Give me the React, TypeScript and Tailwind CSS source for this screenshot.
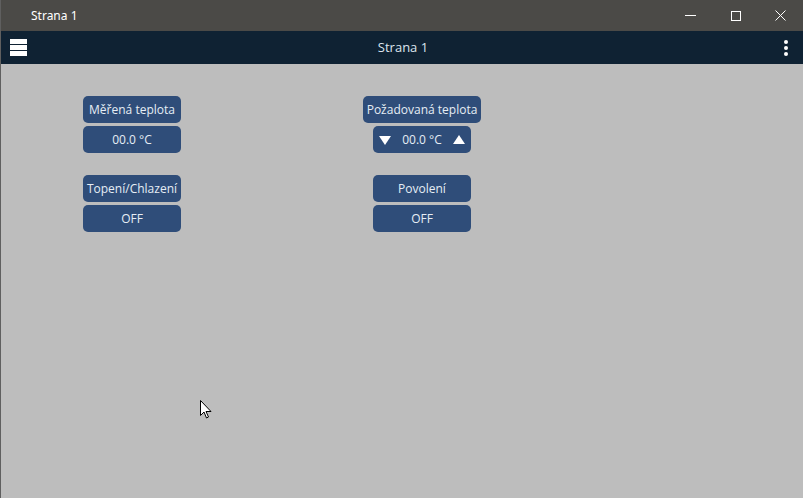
import React from 'react';

const btn =
  'flex items-center justify-center h-[27px] rounded-[5px] bg-[#2f4d79] text-[#e6edf5] text-[12px] leading-none';

function Stepper() {
  return (
    <div className="flex items-center justify-between w-[98px] h-[27px] px-[6px] rounded-[5px] bg-[#2f4d79] text-[#e6edf5] text-[12px] leading-none">
      <svg width="12" height="10" viewBox="0 0 12 10">
        <path d="M0 1 L12 1 L6 10 Z" fill="#ffffff" />
      </svg>
      <span>00.0 °C</span>
      <svg width="12" height="10" viewBox="0 0 12 10">
        <path d="M0 9 L12 9 L6 0 Z" fill="#ffffff" />
      </svg>
    </div>
  );
}

export default function App() {
  return (
    <div
      className="relative w-[803px] h-[498px] flex flex-col overflow-hidden bg-[#bdbdbd] border-l border-[#5f5f5f]"
      style={{ fontFamily: '"Open Sans", "Noto Sans", sans-serif' }}
    >
      {/* window title bar */}
      <div className="h-[31px] flex items-center bg-[#4b4a47] text-white shrink-0">
        <span className="ml-[30px] text-[12px]" style={{ fontFamily: '"Noto Sans", sans-serif' }}>
          Strana 1
        </span>
        <div className="ml-auto flex h-full">
          <div className="w-[45px] h-full flex items-center justify-center">
            <div className="w-[11px] h-px bg-white" />
          </div>
          <div className="w-[45px] h-full flex items-center justify-center">
            <div className="w-[10px] h-[10px] border border-white" />
          </div>
          <div className="w-[45px] h-full flex items-center justify-center">
            <svg width="11" height="11" viewBox="0 0 11 11">
              <path d="M0.5 0.5 L10.5 10.5 M10.5 0.5 L0.5 10.5" stroke="#ffffff" strokeWidth="1" />
            </svg>
          </div>
        </div>
      </div>

      {/* app header */}
      <div className="h-[33px] flex items-center bg-[#0f2233] shrink-0 relative">
        <div className="ml-[9px] w-[17px] flex flex-col gap-px">
          <div className="h-[5px] bg-white" />
          <div className="h-[5px] bg-white" />
          <div className="h-[5px] bg-white" />
        </div>
        <span className="absolute left-[2px] right-0 text-center text-[13px] text-[#dde5ee] pointer-events-none">
          Strana 1
        </span>
        <div className="ml-auto mr-[15px] flex flex-col gap-[2px]">
          <div className="w-[4px] h-[4px] rounded-full bg-white" />
          <div className="w-[4px] h-[4px] rounded-full bg-white" />
          <div className="w-[4px] h-[4px] rounded-full bg-white" />
        </div>
      </div>

      {/* content */}
      <div className="flex-1 flex items-start pt-[32px] pl-[82px] gap-[182px]">
        <div className="w-[98px] flex flex-col">
          <div className={btn}>Měřená teplota</div>
          <div className={btn + ' mt-[3px]'}>00.0 °C</div>
          <div className={btn + ' mt-[22px]'}>Topení/Chlazení</div>
          <div className={btn + ' mt-[3px]'}>OFF</div>
        </div>
        <div className="w-[118px] flex flex-col items-center">
          <div className={btn + ' w-[118px]'}>Požadovaná teplota</div>
          <div className="mt-[3px]">
            <Stepper />
          </div>
          <div className={btn + ' w-[98px] mt-[22px]'}>Povolení</div>
          <div className={btn + ' w-[98px] mt-[3px]'}>OFF</div>
        </div>
      </div>

      {/* mouse cursor */}
      <svg className="absolute left-[199px] top-[400px]" width="12" height="19" viewBox="0 0 12 19">
        <path
          d="M0.5 0.5 L0.5 15.5 L4 12 L6.5 18 L8.5 17 L6 11.5 L11 11.5 Z"
          fill="#ffffff"
          stroke="#000000"
          strokeWidth="1"
          strokeLinejoin="round"
        />
      </svg>
    </div>
  );
}
